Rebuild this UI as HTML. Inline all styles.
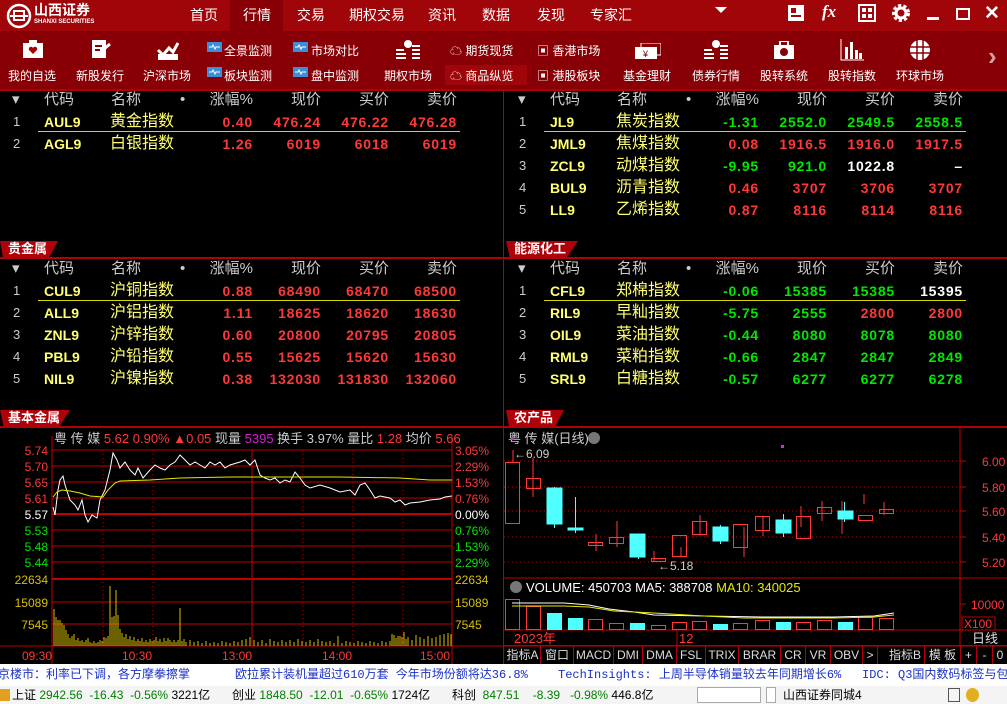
<!DOCTYPE html>
<html><head><meta charset="utf-8">
<style>
*{margin:0;padding:0;box-sizing:border-box}
body{width:1007px;height:704px;background:#000;position:relative;overflow:hidden;font-family:"Liberation Sans","Noto Sans CJK SC",sans-serif;color:#ddd}
.a{position:absolute;white-space:nowrap}
#top{position:absolute;left:0;top:0;width:1007px;height:31px;background:#a0050a}
#tb{position:absolute;left:0;top:31px;width:1007px;height:58px;background:#880006}
.nav{position:absolute;top:5px;font-size:14px;color:#fff}
.tl{position:absolute;font-size:12px;color:#fff}
.row{position:absolute;height:20px;font-size:14px;line-height:20px}
.row span{position:absolute;white-space:nowrap}
.n{color:#ccc;font-size:13px}
.c{color:#ffff70;font-weight:bold;font-family:"Liberation Sans",sans-serif}
.m{color:#ffff70;font-size:16px}
.v{text-align:right;width:70px;font-weight:bold;font-family:"Liberation Sans",sans-serif;letter-spacing:0.8px;font-size:14px}
.h{color:#ccc;font-size:15px}
.r{color:#ff3838}.g{color:#00e800}.w{color:#fff}
.sec{position:absolute;height:16px;background:#b00008;color:#fff;font-weight:bold;font-size:13px;line-height:16px;padding-left:8px;clip-path:polygon(0 0,100% 0,85% 100%,5% 100%)}
.hl{position:absolute;height:2px;background:#b00008}
.tab{position:absolute;top:646px;height:18px;border-right:1px solid #b00008;color:#ddd;font-size:12px;line-height:18px;text-align:center}
</style></head><body>

<div id="top">
 <svg class="a" style="left:6px;top:3px" width="26" height="26" viewBox="0 0 26 26"><circle cx="13" cy="13" r="11" fill="none" stroke="#fff" stroke-width="2.5"/><rect x="8" y="8" width="10" height="9" fill="none" stroke="#fff" stroke-width="2"/><line x1="4" y1="13" x2="22" y2="13" stroke="#fff" stroke-width="2"/></svg>
 <div class="a" style="left:34px;top:2px;font-size:14px;color:#fff;font-weight:bold;line-height:16px">山西证券</div>
 <div class="a" style="left:34px;top:19px;font-size:6px;color:#fff;font-weight:bold">SHANXI SECURITIES</div>
 <div class="a" style="left:230px;top:0;width:53px;height:31px;background:#880006"></div>
 <div class="nav" style="left:190px">首页</div>
 <div class="nav" style="left:243px">行情</div>
 <div class="nav" style="left:297px">交易</div>
 <div class="nav" style="left:349px">期权交易</div>
 <div class="nav" style="left:428px">资讯</div>
 <div class="nav" style="left:482px">数据</div>
 <div class="nav" style="left:537px">发现</div>
 <div class="nav" style="left:590px">专家汇</div>
 <div class="a" style="left:715px;top:7px;width:0;height:0;border-left:6px solid transparent;border-right:6px solid transparent;border-top:6px solid #fff"></div>
 <svg class="a" style="left:787px;top:4px" width="18" height="18"><rect x="1" y="1" width="16" height="16" fill="#fff"/><rect x="4" y="4" width="5" height="5" fill="#a0050a"/><rect x="4" y="11" width="10" height="2" fill="#a0050a"/></svg>
 <div class="a" style="left:822px;top:2px;font-size:17px;color:#fff;font-style:italic;font-family:'Liberation Serif',serif;font-weight:bold">fx</div>
 <svg class="a" style="left:858px;top:4px" width="18" height="18"><rect x="1" y="1" width="16" height="16" fill="none" stroke="#fff" stroke-width="2"/><rect x="4" y="4" width="4" height="4" fill="#fff"/><rect x="10" y="4" width="4" height="4" fill="#fff"/><rect x="4" y="10" width="4" height="4" fill="#fff"/><rect x="10" y="10" width="4" height="4" fill="#fff"/></svg>
 <svg class="a" style="left:891px;top:3px" width="20" height="20"><circle cx="10" cy="10" r="7" fill="none" stroke="#fff" stroke-width="4" stroke-dasharray="3 2"/><circle cx="10" cy="10" r="5" fill="none" stroke="#fff" stroke-width="3"/></svg>
 <div class="a" style="left:927px;top:17px;width:12px;height:3px;background:#fff"></div>
 <div class="a" style="left:956px;top:8px;width:14px;height:12px;border:2px solid #fff"></div>
 <div class="a" style="left:984px;top:2px;font-size:19px;color:#fff;font-weight:bold">✕</div>
</div>

<div id="tb">
 <div class="a" style="left:445px;top:34px;width:82px;height:20px;background:#a0050a"></div>
 <svg class="a" style="left:22px;top:9px" width="22" height="18"><rect x="1" y="3" width="20" height="15" fill="#fff"/><rect x="7" y="0" width="8" height="4" fill="#fff"/><path d="M11 14 L7 10 A2 2 0 0 1 11 8 A2 2 0 0 1 15 10 Z" fill="#a0050a"/></svg>
 <svg class="a" style="left:90px;top:7px" width="22" height="22"><rect x="2" y="2" width="14" height="18" fill="#fff"/><path d="M8 16 L20 6" stroke="#fff" stroke-width="3"/><path d="M5 8 H12 M5 12 H10" stroke="#880006" stroke-width="2"/></svg>
 <svg class="a" style="left:156px;top:9px" width="24" height="20"><path d="M2 10 L7 15 L13 8 L17 12 L22 3" stroke="#fff" stroke-width="3" fill="none"/><rect x="2" y="14" width="20" height="6" fill="#fff"/></svg>
 <div class="tl" style="left:8px;top:36px">我的自选</div>
 <div class="tl" style="left:76px;top:36px">新股发行</div>
 <div class="tl" style="left:143px;top:36px">沪深市场</div>
 <svg class="a" style="left:207px;top:11px" width="15" height="12"><rect width="15" height="10" fill="#3b8fd8"/><path d="M2 5 H5 L6 3 L8 7 L9 5 H13" stroke="#fff" fill="none"/></svg>
 <svg class="a" style="left:207px;top:36px" width="15" height="12"><rect width="15" height="10" fill="#3b8fd8"/><path d="M2 5 H5 L6 3 L8 7 L9 5 H13" stroke="#fff" fill="none"/></svg>
 <svg class="a" style="left:293px;top:11px" width="15" height="12"><rect width="15" height="10" fill="#3b8fd8"/><path d="M2 5 H5 L6 3 L8 7 L9 5 H13" stroke="#fff" fill="none"/></svg>
 <svg class="a" style="left:293px;top:36px" width="15" height="12"><rect width="15" height="10" fill="#3b8fd8"/><path d="M2 5 H5 L6 3 L8 7 L9 5 H13" stroke="#fff" fill="none"/></svg>
 <div class="tl" style="left:224px;top:11px">全景监测</div>
 <div class="tl" style="left:224px;top:36px">板块监测</div>
 <div class="tl" style="left:311px;top:11px">市场对比</div>
 <div class="tl" style="left:311px;top:36px">盘中监测</div>
 <svg class="a" style="left:394px;top:9px" width="28" height="20"><circle cx="14" cy="4" r="4" fill="#fff"/><path d="M2 10 H10 M2 14 H12 M2 18 H12 M18 6 H26 M18 10 H26 M18 14 H26 M18 18 H26" stroke="#fff" stroke-width="2"/></svg>
 <div class="tl" style="left:384px;top:36px">期权市场</div>
 <div class="tl" style="left:450px;top:11px">☁ 期货现货</div>
 <div class="tl" style="left:450px;top:36px">☁ 商品纵览</div>
 <div class="tl" style="left:537px;top:11px">▣ 香港市场</div>
 <div class="tl" style="left:537px;top:36px">▣ 港股板块</div>
 <svg class="a" style="left:635px;top:12px" width="26" height="16"><rect x="6" y="0" width="20" height="12" fill="none" stroke="#fff"/><rect x="0" y="4" width="22" height="12" fill="#fff"/><text x="8" y="14" font-size="9" fill="#880006">¥</text></svg>
 <div class="tl" style="left:623px;top:36px">基金理财</div>
 <svg class="a" style="left:702px;top:9px" width="28" height="20"><circle cx="14" cy="4" r="4" fill="#fff"/><path d="M2 10 H10 M2 14 H12 M2 18 H12 M18 6 H26 M18 10 H26 M18 14 H26 M18 18 H26" stroke="#fff" stroke-width="2"/></svg>
 <div class="tl" style="left:692px;top:36px">债券行情</div>
 <svg class="a" style="left:773px;top:10px" width="22" height="18"><rect x="1" y="4" width="20" height="14" fill="#fff"/><rect x="7" y="0" width="8" height="5" fill="none" stroke="#fff" stroke-width="2"/><circle cx="11" cy="11" r="4" fill="#880006"/></svg>
 <div class="tl" style="left:760px;top:36px">股转系统</div>
 <svg class="a" style="left:840px;top:8px" width="24" height="22"><path d="M1 0 V21 H24" stroke="#fff" fill="none"/><rect x="5" y="8" width="3" height="12" fill="#fff"/><rect x="10" y="3" width="3" height="17" fill="#fff"/><rect x="15" y="11" width="3" height="9" fill="#fff"/><rect x="19" y="14" width="3" height="6" fill="#fff"/></svg>
 <div class="tl" style="left:828px;top:36px">股转指数</div>
 <svg class="a" style="left:909px;top:8px" width="22" height="22"><circle cx="11" cy="11" r="10" fill="#fff"/><path d="M1 8 H21 M1 14 H21 M8 1 V21 M14 1 V21" stroke="#880006" stroke-width="1.5"/></svg>
 <div class="tl" style="left:896px;top:36px">环球市场</div>
 <div class="a" style="left:988px;top:10px;font-size:26px;color:#d8a0a0;font-weight:bold">›</div>
</div>

<div class="a" style="left:503px;top:89px;width:1px;height:575px;background:#b00008"></div>
<div class="hl" style="left:0;top:89px;width:1007px"></div>

<div class="row" style="left:0;top:90px"><span class="h" style="left:12px">▾</span><span class="h" style="left:44px">代码</span><span class="h" style="left:111px">名称</span><span class="h" style="left:180px">•</span><span class="h v" style="left:183px;font-weight:normal;letter-spacing:0">涨幅%</span><span class="h v" style="left:251px;font-weight:normal;letter-spacing:0">现价</span><span class="h v" style="left:319px;font-weight:normal;letter-spacing:0">买价</span><span class="h v" style="left:387px;font-weight:normal;letter-spacing:0">卖价</span></div>
<div class="row" style="left:0;top:112px"><span class="n" style="left:13px">1</span><span class="c" style="left:44px">AUL9</span><span class="m" style="left:110px">黄金指数</span><span class="v r" style="left:183px">0.40</span><span class="v r" style="left:251px">476.24</span><span class="v r" style="left:319px">476.22</span><span class="v r" style="left:387px">476.28</span></div>
<div class="a" style="left:38px;top:131px;width:422px;height:1px;background:#d8d800"></div>
<div class="row" style="left:0;top:134px"><span class="n" style="left:13px">2</span><span class="c" style="left:44px">AGL9</span><span class="m" style="left:110px">白银指数</span><span class="v r" style="left:183px">1.26</span><span class="v r" style="left:251px">6019</span><span class="v r" style="left:319px">6018</span><span class="v r" style="left:387px">6019</span></div>

<div class="row" style="left:506px;top:90px"><span class="h" style="left:12px">▾</span><span class="h" style="left:44px">代码</span><span class="h" style="left:111px">名称</span><span class="h" style="left:180px">•</span><span class="h v" style="left:183px;font-weight:normal;letter-spacing:0">涨幅%</span><span class="h v" style="left:251px;font-weight:normal;letter-spacing:0">现价</span><span class="h v" style="left:319px;font-weight:normal;letter-spacing:0">买价</span><span class="h v" style="left:387px;font-weight:normal;letter-spacing:0">卖价</span></div>
<div class="row" style="left:506px;top:112px"><span class="n" style="left:13px">1</span><span class="c" style="left:44px">JL9</span><span class="m" style="left:110px">焦炭指数</span><span class="v g" style="left:183px">-1.31</span><span class="v g" style="left:251px">2552.0</span><span class="v g" style="left:319px">2549.5</span><span class="v g" style="left:387px">2558.5</span></div>
<div class="a" style="left:544px;top:131px;width:422px;height:1px;background:#d8d800"></div>
<div class="row" style="left:506px;top:134px"><span class="n" style="left:13px">2</span><span class="c" style="left:44px">JML9</span><span class="m" style="left:110px">焦煤指数</span><span class="v r" style="left:183px">0.08</span><span class="v r" style="left:251px">1916.5</span><span class="v r" style="left:319px">1916.0</span><span class="v r" style="left:387px">1917.5</span></div>
<div class="row" style="left:506px;top:156px"><span class="n" style="left:13px">3</span><span class="c" style="left:44px">ZCL9</span><span class="m" style="left:110px">动煤指数</span><span class="v g" style="left:183px">-9.95</span><span class="v g" style="left:251px">921.0</span><span class="v w" style="left:319px">1022.8</span><span class="v w" style="left:387px">–</span></div>
<div class="row" style="left:506px;top:178px"><span class="n" style="left:13px">4</span><span class="c" style="left:44px">BUL9</span><span class="m" style="left:110px">沥青指数</span><span class="v r" style="left:183px">0.46</span><span class="v r" style="left:251px">3707</span><span class="v r" style="left:319px">3706</span><span class="v r" style="left:387px">3707</span></div>
<div class="row" style="left:506px;top:200px"><span class="n" style="left:13px">5</span><span class="c" style="left:44px">LL9</span><span class="m" style="left:110px">乙烯指数</span><span class="v r" style="left:183px">0.87</span><span class="v r" style="left:251px">8116</span><span class="v r" style="left:319px">8114</span><span class="v r" style="left:387px">8116</span></div>

<div class="sec" style="left:0;top:241px;width:58px">贵金属</div>
<div class="sec" style="left:506px;top:241px;width:72px">能源化工</div>
<div class="hl" style="left:0;top:257px;width:1007px"></div>

<div class="row" style="left:0;top:259px"><span class="h" style="left:12px">▾</span><span class="h" style="left:44px">代码</span><span class="h" style="left:111px">名称</span><span class="h" style="left:180px">•</span><span class="h v" style="left:183px;font-weight:normal;letter-spacing:0">涨幅%</span><span class="h v" style="left:251px;font-weight:normal;letter-spacing:0">现价</span><span class="h v" style="left:319px;font-weight:normal;letter-spacing:0">买价</span><span class="h v" style="left:387px;font-weight:normal;letter-spacing:0">卖价</span></div>
<div class="row" style="left:0;top:281px"><span class="n" style="left:13px">1</span><span class="c" style="left:44px">CUL9</span><span class="m" style="left:110px">沪铜指数</span><span class="v r" style="left:183px">0.88</span><span class="v r" style="left:251px">68490</span><span class="v r" style="left:319px">68470</span><span class="v r" style="left:387px">68500</span></div>
<div class="a" style="left:38px;top:300px;width:422px;height:1px;background:#d8d800"></div>
<div class="row" style="left:0;top:303px"><span class="n" style="left:13px">2</span><span class="c" style="left:44px">ALL9</span><span class="m" style="left:110px">沪铝指数</span><span class="v r" style="left:183px">1.11</span><span class="v r" style="left:251px">18625</span><span class="v r" style="left:319px">18620</span><span class="v r" style="left:387px">18630</span></div>
<div class="row" style="left:0;top:325px"><span class="n" style="left:13px">3</span><span class="c" style="left:44px">ZNL9</span><span class="m" style="left:110px">沪锌指数</span><span class="v r" style="left:183px">0.60</span><span class="v r" style="left:251px">20800</span><span class="v r" style="left:319px">20795</span><span class="v r" style="left:387px">20805</span></div>
<div class="row" style="left:0;top:347px"><span class="n" style="left:13px">4</span><span class="c" style="left:44px">PBL9</span><span class="m" style="left:110px">沪铅指数</span><span class="v r" style="left:183px">0.55</span><span class="v r" style="left:251px">15625</span><span class="v r" style="left:319px">15620</span><span class="v r" style="left:387px">15630</span></div>
<div class="row" style="left:0;top:369px"><span class="n" style="left:13px">5</span><span class="c" style="left:44px">NIL9</span><span class="m" style="left:110px">沪镍指数</span><span class="v r" style="left:183px">0.38</span><span class="v r" style="left:251px">132030</span><span class="v r" style="left:319px">131830</span><span class="v r" style="left:387px">132060</span></div>

<div class="row" style="left:506px;top:259px"><span class="h" style="left:12px">▾</span><span class="h" style="left:44px">代码</span><span class="h" style="left:111px">名称</span><span class="h" style="left:180px">•</span><span class="h v" style="left:183px;font-weight:normal;letter-spacing:0">涨幅%</span><span class="h v" style="left:251px;font-weight:normal;letter-spacing:0">现价</span><span class="h v" style="left:319px;font-weight:normal;letter-spacing:0">买价</span><span class="h v" style="left:387px;font-weight:normal;letter-spacing:0">卖价</span></div>
<div class="row" style="left:506px;top:281px"><span class="n" style="left:13px">1</span><span class="c" style="left:44px">CFL9</span><span class="m" style="left:110px">郑棉指数</span><span class="v g" style="left:183px">-0.06</span><span class="v g" style="left:251px">15385</span><span class="v g" style="left:319px">15385</span><span class="v w" style="left:387px">15395</span></div>
<div class="a" style="left:544px;top:300px;width:422px;height:1px;background:#d8d800"></div>
<div class="row" style="left:506px;top:303px"><span class="n" style="left:13px">2</span><span class="c" style="left:44px">RIL9</span><span class="m" style="left:110px">早籼指数</span><span class="v g" style="left:183px">-5.75</span><span class="v g" style="left:251px">2555</span><span class="v r" style="left:319px">2800</span><span class="v r" style="left:387px">2800</span></div>
<div class="row" style="left:506px;top:325px"><span class="n" style="left:13px">3</span><span class="c" style="left:44px">OIL9</span><span class="m" style="left:110px">菜油指数</span><span class="v g" style="left:183px">-0.44</span><span class="v g" style="left:251px">8080</span><span class="v g" style="left:319px">8078</span><span class="v g" style="left:387px">8080</span></div>
<div class="row" style="left:506px;top:347px"><span class="n" style="left:13px">4</span><span class="c" style="left:44px">RML9</span><span class="m" style="left:110px">菜粕指数</span><span class="v g" style="left:183px">-0.66</span><span class="v g" style="left:251px">2847</span><span class="v g" style="left:319px">2847</span><span class="v g" style="left:387px">2849</span></div>
<div class="row" style="left:506px;top:369px"><span class="n" style="left:13px">5</span><span class="c" style="left:44px">SRL9</span><span class="m" style="left:110px">白糖指数</span><span class="v g" style="left:183px">-0.57</span><span class="v g" style="left:251px">6277</span><span class="v g" style="left:319px">6277</span><span class="v g" style="left:387px">6278</span></div>

<div class="sec" style="left:0;top:410px;width:70px">基本金属</div>
<div class="sec" style="left:506px;top:410px;width:58px">农产品</div>
<div class="hl" style="left:0;top:426px;width:1007px"></div>

<svg class="a" style="left:0;top:427px" width="503" height="237" font-family="Liberation Sans, Noto Sans CJK SC, sans-serif" font-size="12">
 <g stroke="#c00000" stroke-width="1">
  <line x1="52" y1="23" x2="452" y2="23"/><line x1="52" y1="39" x2="452" y2="39"/><line x1="52" y1="55" x2="452" y2="55"/><line x1="52" y1="71" x2="452" y2="71"/>
  <line x1="52" y1="103" x2="452" y2="103"/><line x1="52" y1="119" x2="452" y2="119"/><line x1="52" y1="135" x2="452" y2="135"/>
  <line x1="52" y1="175" x2="452" y2="175"/><line x1="52" y1="197" x2="452" y2="197"/>
  <line x1="52" y1="87" x2="452" y2="87" stroke-width="2"/><line x1="52" y1="152" x2="452" y2="152" stroke-width="2"/>
  <line x1="0" y1="219" x2="503" y2="219" stroke-width="1"/>
  <line x1="52" y1="9" x2="52" y2="237"/><line x1="452" y1="9" x2="452" y2="237"/><line x1="252" y1="23" x2="252" y2="219"/>
 </g>
 <g stroke="#c00000" stroke-dasharray="1 3"><line x1="103" y1="23" x2="103" y2="219"/><line x1="153" y1="23" x2="153" y2="219"/><line x1="303" y1="23" x2="303" y2="219"/><line x1="353" y1="23" x2="353" y2="219"/><line x1="403" y1="23" x2="403" y2="219"/></g>
 <text x="54" y="16" fill="#ccc" font-size="13">粤 传 媒 <tspan fill="#ff3838">5.62 0.90% ▲0.05</tspan> 现量 <tspan fill="#d020d0">5395</tspan> 换手 3.97% 量比 <tspan fill="#ff3838">1.28</tspan> 均价 <tspan fill="#ff3838">5.66</tspan></text>
 <g text-anchor="end"><text x="48" y="28" fill="#ff3838">5.74</text><text x="48" y="44" fill="#ff3838">5.70</text><text x="48" y="60" fill="#ff3838">5.65</text><text x="48" y="76" fill="#ff3838">5.61</text><text x="48" y="92" fill="#fff">5.57</text><text x="48" y="108" fill="#00e800">5.53</text><text x="48" y="124" fill="#00e800">5.48</text><text x="48" y="140" fill="#00e800">5.44</text><text x="48" y="157" fill="#d8c000">22634</text><text x="48" y="180" fill="#d8c000">15089</text><text x="48" y="202" fill="#d8c000">7545</text></g>
 <g><text x="455" y="28" fill="#ff3838">3.05%</text><text x="455" y="44" fill="#ff3838">2.29%</text><text x="455" y="60" fill="#ff3838">1.53%</text><text x="455" y="76" fill="#ff3838">0.76%</text><text x="455" y="92" fill="#fff">0.00%</text><text x="455" y="108" fill="#00e800">0.76%</text><text x="455" y="124" fill="#00e800">1.53%</text><text x="455" y="140" fill="#00e800">2.29%</text><text x="455" y="157" fill="#d8c000">22634</text><text x="455" y="180" fill="#d8c000">15089</text><text x="455" y="202" fill="#d8c000">7545</text></g>
 <path fill="none" stroke="#fff" d="M53 80 L55 88 L58 63 L60 53 L63 49 L65 58 L70 73 L75 78 L78 83 L82 73 L85 88 L88 95 L92 88 L97 91 L100 73 L105 63 L110 43 L113 26 L117 33 L120 41 L125 35 L130 43 L135 48 L138 41 L143 51 L150 43 L155 38 L160 41 L165 43 L170 38 L175 35 L180 28 L185 33 L190 38 L195 35 L200 38 L205 41 L210 35 L215 38 L220 35 L225 41 L230 38 L240 35 L245 33 L250 38 L255 33 L260 48 L265 51 L270 53 L275 51 L280 56 L285 53 L290 55 L295 45 L300 51 L305 58 L310 61 L320 58 L330 61 L340 65 L350 63 L355 68 L360 58 L365 56 L370 63 L375 71 L380 69 L390 71 L395 75 L400 73 L405 78 L410 76 L420 75 L430 73 L440 72 L445 70 L452 69"/>
 <path fill="none" stroke="#e8e800" d="M53 70 L57 65 L62 63 L70 64 L80 66 L90 69 L103 70 L108 63 L115 56 L120 54 L150 53 L180 51 L230 50 L300 50 L340 50 L400 51 L430 53 L452 53"/>
 <path stroke="#d8c000" stroke-width="1" d="M54 219V182 M56 219V190 M58 219V193 M60 219V193 M62 219V196 M64 219V198 M66 219V203 M68 219V207 M70 219V211 M72 219V209 M74 219V207 M76 219V213 M78 219V211 M80 219V214 M82 219V213 M84 219V215 M86 219V213 M88 219V211 M90 219V215 M92 219V216 M94 219V214 M96 219V216 M98 219V215 M100 219V213 M102 219V214 M104 219V210 M106 219V211 M108 219V209 M110 219V159 M112 219V190 M114 219V189 M116 219V163 M118 219V188 M120 219V202 M122 219V206 M124 219V210 M126 219V207 M128 219V212 M130 219V209 M132 219V213 M134 219V210 M136 219V214 M138 219V212 M140 219V214 M142 219V211 M144 219V215 M146 219V213 M148 219V215 M150 219V212 M152 219V214 M154 219V213 M156 219V210 M158 219V214 M160 219V212 M162 219V215 M164 219V211 M166 219V214 M168 219V211 M170 219V213 M172 219V215 M174 219V213 M176 219V215 M178 219V213 M180 219V181 M182 219V214 M184 219V212 M186 219V215 M190 219V213 M194 219V215 M198 219V214 M202 219V216 M206 219V214 M210 219V216 M214 219V215 M218 219V216 M222 219V214 M226 219V215 M230 219V216 M234 219V214 M238 219V215 M242 219V213 M246 219V212 M250 219V210 M254 219V213 M258 219V215 M262 219V213 M266 219V216 M270 219V212 M274 219V214 M278 219V215 M282 219V213 M286 219V215 M290 219V213 M294 219V215 M298 219V212 M302 219V214 M306 219V215 M310 219V213 M314 219V215 M318 219V212 M322 219V214 M326 219V215 M330 219V214 M334 219V216 M338 219V209 M342 219V216 M346 219V214 M350 219V215 M354 219V216 M358 219V214 M362 219V215 M366 219V216 M370 219V214 M374 219V215 M378 219V216 M382 219V214 M386 219V215 M390 219V214 M392 219V207 M394 219V208 M396 219V211 M398 219V209 M400 219V209 M402 219V210 M404 219V205 M406 219V212 M408 219V210 M412 219V213 M416 219V208 M420 219V210 M424 219V212 M428 219V209 M432 219V211 M436 219V210 M440 219V208 M444 219V207 M448 219V206 M451 219V207"/>
 <g fill="#ff3838"><text x="22" y="233">09:30</text><text x="122" y="233">10:30</text><text x="222" y="233">13:00</text><text x="322" y="233">14:00</text><text x="420" y="233">15:00</text></g>
</svg>

<svg class="a" style="left:504px;top:427px" width="503" height="237" font-family="Liberation Sans, Noto Sans CJK SC, sans-serif" font-size="12">
 <g stroke="#c00000"><line x1="456" y1="0" x2="456" y2="219"/><line x1="0" y1="151" x2="503" y2="151"/><line x1="0" y1="203" x2="503" y2="203"/><line x1="173" y1="203" x2="173" y2="219"/><line x1="0" y1="219" x2="503" y2="219"/></g>
 <g stroke="#c00000" stroke-dasharray="1 3"><line x1="0" y1="34" x2="456" y2="34"/><line x1="0" y1="60" x2="456" y2="60"/><line x1="0" y1="84" x2="456" y2="84"/><line x1="0" y1="110" x2="456" y2="110"/><line x1="0" y1="135" x2="456" y2="135"/></g>
 <g stroke="#c00000"><line x1="456" y1="34" x2="462" y2="34"/><line x1="456" y1="60" x2="462" y2="60"/><line x1="456" y1="84" x2="462" y2="84"/><line x1="456" y1="110" x2="462" y2="110"/><line x1="456" y1="135" x2="462" y2="135"/><line x1="456" y1="177" x2="462" y2="177"/></g>
 <g fill="#ff3838"><text x="478" y="39">6.00</text><text x="478" y="65">5.80</text><text x="478" y="89">5.60</text><text x="478" y="115">5.40</text><text x="478" y="140">5.20</text><text x="467" y="182">10000</text></g>
 <rect x="458" y="190" width="33" height="13" fill="none" stroke="#c00000"/><text x="460" y="201" fill="#ff3838">X100</text>
 <text x="4" y="16" fill="#ccc" font-size="13">粤 传 媒(日线)</text><circle cx="90" cy="11" r="6" fill="#777"/>
 <rect x="7" y="10" width="3" height="3" fill="#e020e0"/><rect x="277" y="18" width="3" height="3" fill="#e020e0"/>
 <text x="10" y="31" fill="#ccc">←6.09</text><text x="154" y="143" fill="#ccc">←5.18</text>
 <g stroke="#ff3838" fill="none">
  <path d="M9 23V35 M29 31V70 M92 107V124 M113 94V120 M150 124V135 M177 120V129 M196 88V107 M240 100V130 M259 89V109 M297 79V100 M318 74V94 M338 74V107 M360 67V77 M380 75V88"/>
  <rect x="1.5" y="35.5" width="14" height="61"/><rect x="22.5" y="51.5" width="14" height="10"/><rect x="84.5" y="115.5" width="14" height="3"/><rect x="105.5" y="110.5" width="14" height="6"/><rect x="147.5" y="131.5" width="14" height="3"/><rect x="168.5" y="108.5" width="14" height="21"/><rect x="188.5" y="94.5" width="14" height="13"/><rect x="229.5" y="97.5" width="14" height="23"/><rect x="251.5" y="89.5" width="14" height="14"/><rect x="292.5" y="89.5" width="14" height="22"/><rect x="313.5" y="80.5" width="14" height="6"/><rect x="354.5" y="88.5" width="14" height="5"/><rect x="375.5" y="82.5" width="14" height="4"/>
 </g>
 <g stroke="#50ffff" fill="#50ffff">
  <path d="M50.5 60V101 M71.5 70V106 M134.5 107V132 M216.5 98V117 M279.5 87V110 M340.5 75V95" fill="none"/>
  <rect x="43" y="61" width="15" height="36"/><rect x="64" y="101" width="15" height="2"/><rect x="126" y="107" width="15" height="23"/><rect x="209" y="100" width="15" height="14"/><rect x="272" y="93" width="15" height="13"/><rect x="334" y="84" width="15" height="8"/>
 </g>
 <circle cx="12" cy="160" r="6" fill="#777"/>
 <text x="22" y="165" fill="#fff" font-size="13">VOLUME: 450703 MA5: 388708 <tspan fill="#e8e800">MA10: 340025</tspan></text>
 <g stroke="#ff3838" fill="none">
  <rect x="1.5" y="172.5" width="14" height="30"/><rect x="22.5" y="179.5" width="14" height="23"/><rect x="84.5" y="192.5" width="14" height="10"/><rect x="105.5" y="196.5" width="14" height="6"/><rect x="147.5" y="198.5" width="14" height="4"/><rect x="168.5" y="195.5" width="14" height="7"/><rect x="188.5" y="194.5" width="14" height="8"/><rect x="229.5" y="196.5" width="14" height="6"/><rect x="251.5" y="193.5" width="14" height="9"/><rect x="292.5" y="195.5" width="14" height="7"/><rect x="313.5" y="193.5" width="14" height="9"/><rect x="354.5" y="190.5" width="14" height="12"/><rect x="375.5" y="191.5" width="14" height="11"/>
 </g>
 <g fill="#50ffff"><rect x="43" y="186" width="15" height="17"/><rect x="64" y="191" width="15" height="12"/><rect x="126" y="196" width="15" height="7"/><rect x="209" y="197" width="15" height="6"/><rect x="272" y="195" width="15" height="8"/><rect x="334" y="195" width="15" height="8"/></g>
 <path fill="none" stroke="#fff" d="M8 176 H60 L85 178 L105 182 L130 185 L150 188 L200 189 L260 190 L330 190 L370 189 L390 186"/>
 <path fill="none" stroke="#e8e800" d="M8 179 H60 L85 180 L110 184 L150 186 L200 189 L240 191 L330 191 L370 190 L390 188"/>
 <text x="10" y="216" fill="#ff3838" font-size="13">2023年</text><text x="175" y="216" fill="#ff3838" font-size="13">12</text><text x="468" y="216" fill="#ddd" font-size="13">日线</text>
</svg>

<div class="a" style="left:503px;top:645px;width:504px;height:1px;background:#b00008"></div>
<div class="tab" style="left:505px;width:36px">指标A</div><div class="tab" style="left:541px;width:33px">窗口</div><div class="tab" style="left:574px;width:40px">MACD</div><div class="tab" style="left:614px;width:29px">DMI</div><div class="tab" style="left:643px;width:34px">DMA</div><div class="tab" style="left:677px;width:29px">FSL</div><div class="tab" style="left:706px;width:33px">TRIX</div><div class="tab" style="left:739px;width:42px">BRAR</div><div class="tab" style="left:781px;width:25px">CR</div><div class="tab" style="left:806px;width:25px">VR</div><div class="tab" style="left:831px;width:32px">OBV</div><div class="tab" style="left:863px;width:15px">&gt;</div><div class="tab" style="left:878px;width:47px;text-align:right;padding-right:3px">指标B</div><div class="tab" style="left:925px;width:36px">模 板</div><div class="tab" style="left:961px;width:16px">+</div><div class="tab" style="left:977px;width:16px">-</div><div class="tab" style="left:993px;width:14px;border:none">0</div>

<div class="a" style="left:0;top:664px;width:1007px;height:22px;background:#fff;font-size:12px;line-height:22px;color:#1a30c8;font-family:'Liberation Mono','Noto Sans CJK SC',monospace">
 <span class="a" style="left:-2px">京楼市：利率已下调，各方摩拳擦掌</span>
 <span class="a" style="left:235px">欧拉累计装机量超过610万套 今年市场份额将达36.8%</span>
 <span class="a" style="left:558px">TechInsights: 上周半导体销量较去年同期增长6%</span>
 <span class="a" style="left:862px">IDC: Q3国内数码标签与包装</span>
</div>
<div class="a" style="left:0;top:686px;width:1007px;height:18px;background:#f4f4f4;font-size:12px;line-height:18px;color:#000">
 <span class="a" style="left:0;top:3px;width:10px;height:12px;background:#e0a020"></span>
 <span class="a" style="left:12px">上证 <b style="color:#008000;font-weight:normal">2942.56 &nbsp;-16.43 &nbsp;-0.56%</b> 3221亿</span>
 <span class="a" style="left:232px">创业 <b style="color:#008000;font-weight:normal">1848.50 &nbsp;-12.01 &nbsp;-0.65%</b> 1724亿</span>
 <span class="a" style="left:452px">科创 &nbsp;<b style="color:#008000;font-weight:normal">847.51 &nbsp;&nbsp;&nbsp;-8.39 &nbsp;&nbsp;-0.98%</b> 446.8亿</span>
 <span class="a" style="left:697px;top:1px;width:64px;height:16px;border:1px solid #aaa;background:#fff"></span>
 <span class="a" style="left:766px;top:1px;width:10px;height:16px;border:1px solid #aaa;background:#fff"></span>
 <span class="a" style="left:783px">山西证券同城4</span>
 <span class="a" style="left:948px;top:2px;width:12px;height:14px;border:1px solid #555"></span>
 <span class="a" style="left:966px;top:2px;width:13px;height:14px;border-radius:50%;background:#e0b020"></span>
</div>
</body></html>
